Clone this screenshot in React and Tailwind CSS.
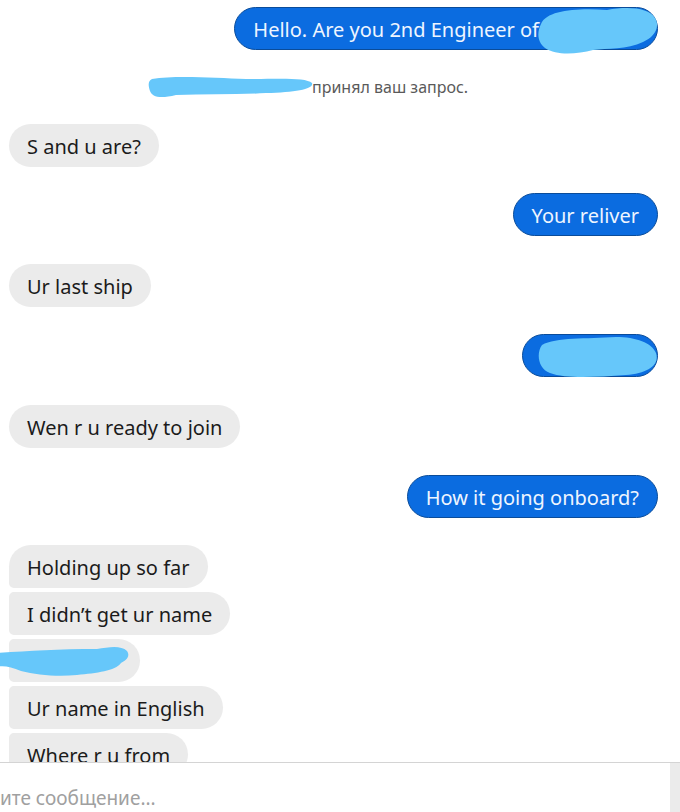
import React from "react";

const font = { fontFamily: '"Noto Sans", "Open Sans", sans-serif' };

// light-blue scribble used to hide names
const Scribble = ({ className, d, vb }) => (
  <svg className={"absolute pointer-events-none " + className} viewBox={vb} preserveAspectRatio="none">
    <path d={d} fill="#66c7fa" />
  </svg>
);

const Out = ({ children, className = "" }) => (
  <div className="flex justify-end pr-[22px]">
    <div
      className={
        "relative h-[43px] rounded-full bg-[#0b6ce0] border border-[#0a4c9a] px-[18px] pt-[3px] flex items-center text-[20px] text-[#eef5ff] whitespace-nowrap " +
        className
      }
    >
      {children}
    </div>
  </div>
);

const In = ({ children, shape = "rounded-full", className = "" }) => (
  <div className="flex justify-start pl-[9px]">
    <div
      className={
        "relative h-[43px] bg-[#ebebeb] px-[18px] pt-[3px] flex items-center text-[20px] text-[#1b1b1b] whitespace-nowrap " +
        shape +
        " " +
        className
      }
    >
      {children}
    </div>
  </div>
);

export default function App() {
  return (
    <div className="w-[680px] h-[812px] bg-white flex flex-col overflow-hidden" style={font}>
      <div className="flex-1 overflow-hidden flex flex-col pt-[7px]">
        <Out>
          <span className="pr-[100px]">Hello. Are you 2nd Engineer of</span>
          <Scribble
            className="right-[-2px] top-[-4px] w-[122px] h-[52px]"
            vb="0 0 122 52"
            d="M4 20 C10 6 40 4 70 6 C92 2 112 4 118 14 C124 24 116 34 106 38 C90 46 70 44 56 46 C40 50 20 52 8 44 C0 38 0 28 4 20 Z"
          />
        </Out>

        <div className="relative mt-[27px] h-[20px] flex items-center pl-[312px] text-[16px] text-[#5a5a5a]">
          принял ваш запрос.
          <Scribble
            className="left-[146px] top-[-2px] w-[168px] h-[24px]"
            vb="0 0 168 24"
            d="M6 4 C30 0 70 3 100 4 C130 4 160 2 166 8 C168 14 150 17 120 18 C90 20 60 19 30 20 C14 24 6 22 4 16 C2 10 2 6 6 4 Z"
          />
        </div>

        <div className="mt-[27px]">
          <In>S and u are?</In>
        </div>
        <div className="mt-[26px]">
          <Out>Your reliver</Out>
        </div>
        <div className="mt-[28px]">
          <In>Ur last ship</In>
        </div>
        <div className="mt-[27px]">
          <Out className="w-[136px]">
            <Scribble
              className="right-[-1px] top-[0px] w-[122px] h-[42px]"
              vb="0 0 122 42"
              d="M6 10 C20 2 50 4 80 2 C100 2 116 8 120 18 C124 30 112 38 90 40 C60 42 30 44 14 38 C2 34 0 18 6 10 Z"
            />
          </Out>
        </div>
        <div className="mt-[28px]">
          <In>Wen r u ready to join</In>
        </div>
        <div className="mt-[27px]">
          <Out>How it going onboard?</Out>
        </div>

        <div className="mt-[27px] flex flex-col gap-[4px]">
          <In shape="rounded-[22px] rounded-bl-[5px]">Holding up so far</In>
          <In shape="rounded-[22px] rounded-l-[5px]">I didn’t get ur name</In>
          <In shape="rounded-[22px] rounded-l-[5px]" className="w-[131px]">
            <Scribble
              className="left-[-12px] top-[6px] w-[134px] h-[32px]"
              vb="0 0 134 32"
              d="M0 8 C30 6 60 4 100 4 C112 2 124 0 130 6 C134 12 128 16 124 18 C118 26 100 28 80 30 C60 32 40 30 24 26 C14 22 6 20 0 22 Z"
            />
          </In>
          <In shape="rounded-[22px] rounded-l-[5px]">Ur name in English</In>
          <In shape="rounded-[22px] rounded-l-[5px]">Where r u from</In>
        </div>
      </div>

      <div className="h-[50px] shrink-0 border-t border-[#d4d4d4] flex">
        <div className="flex-1 flex items-end pb-[0px] text-[19px] text-[#a0a0a0] whitespace-nowrap">
          ите сообщение...
        </div>
        <div className="w-[10px] bg-[#ebebeb]"></div>
      </div>
    </div>
  );
}
